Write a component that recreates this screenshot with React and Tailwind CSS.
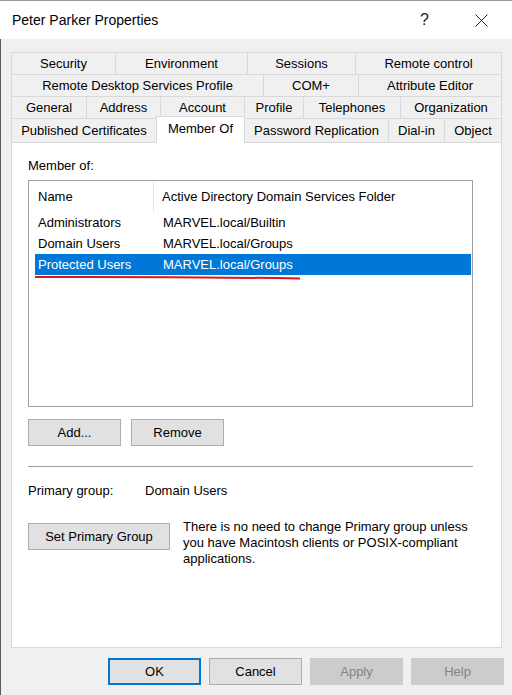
import React from 'react';

const rows = [
  [
    { label: 'Security', w: 104 },
    { label: 'Environment', w: 132 },
    { label: 'Sessions', w: 108 },
    { label: 'Remote control', w: 146 },
  ],
  [
    { label: 'Remote Desktop Services Profile', w: 252 },
    { label: 'COM+', w: 95 },
    { label: 'Attribute Editor', w: 143 },
  ],
  [
    { label: 'General', w: 75 },
    { label: 'Address', w: 74 },
    { label: 'Account', w: 84 },
    { label: 'Profile', w: 59 },
    { label: 'Telephones', w: 97 },
    { label: 'Organization', w: 101 },
  ],
];

const lastRow = [
  { label: 'Published Certificates', w: 144 },
  { label: 'Member Of', w: 89, selected: true },
  { label: 'Password Replication', w: 144 },
  { label: 'Dial-in', w: 56 },
  { label: 'Object', w: 57 },
];

const groups = [
  { name: 'Administrators', folder: 'MARVEL.local/Builtin' },
  { name: 'Domain Users', folder: 'MARVEL.local/Groups' },
  { name: 'Protected Users', folder: 'MARVEL.local/Groups', selected: true },
];

const Button = ({ children, width, primary, disabled }) => (
  <div
    className={
      'h-[27px] flex items-center justify-center text-[13px] ' +
      (primary
        ? 'border-2 border-[#0078d7] bg-[#e1e1e1] text-black'
        : disabled
        ? 'border border-[#cccccc] bg-[#cccccc] text-[#838383]'
        : 'border border-[#adadad] bg-[#e1e1e1] text-black')
    }
    style={{ width }}
  >
    {children}
  </div>
);

export default function App() {
  return (
    <div
      className="relative w-[512px] h-[695px] bg-[#f0f0f0] flex flex-col overflow-hidden text-black"
      style={{ fontFamily: '"Liberation Sans", Arial, sans-serif' }}
    >
      {/* Title bar */}
      <div className="h-[39px] shrink-0 bg-white border-t border-[#9a9a9a] flex items-center pl-[12px]">
        <span className="text-[14px] flex-1">Peter Parker Properties</span>
        <span className="text-[16px] w-[12px] mr-[43px] text-[#222]">?</span>
        <svg width="13" height="13" viewBox="0 0 13 13" className="mr-[24px]">
          <path d="M0.5 0.5 L12.5 12.5 M12.5 0.5 L0.5 12.5" stroke="#222" strokeWidth="1" />
        </svg>
      </div>

      {/* Body */}
      <div className="flex-1 border-l border-[#5a5a5a] pl-[10px] pt-[13px]">
        {/* Tabs */}
        <div className="flex flex-col text-[13px] leading-[16px]">
          {rows.map((row, i) => (
            <div key={i} className="flex h-[22px] border-l border-[#d9d9d9]">
              {row.map(t => (
                <div
                  key={t.label}
                  className="h-[22px] border-t border-r border-[#d9d9d9] flex items-center justify-center"
                  style={{ width: t.w }}
                >
                  {t.label}
                </div>
              ))}
            </div>
          ))}
          <div className="flex h-[24px] border-l border-[#d9d9d9]">
            {lastRow.map(t =>
              t.selected ? (
                <div
                  key={t.label}
                  className="relative z-10 h-[27px] mt-[-2px] mb-[-1px] bg-white border-l border-t border-r border-[#d9d9d9] flex justify-center pt-[4px]"
                  style={{ width: t.w }}
                >
                  {t.label}
                </div>
              ) : (
                <div
                  key={t.label}
                  className={
                    'h-[24px] border-t border-[#d9d9d9] flex items-center justify-center ' +
                    (t.label === 'Published Certificates' ? '' : 'border-r')
                  }
                  style={{ width: t.w }}
                >
                  {t.label}
                </div>
              )
            )}
          </div>
        </div>

        {/* Panel */}
        <div className="w-[491px] h-[506px] bg-white border border-[#d9d9d9] pl-[16px] pt-[15px] text-[13px] leading-[16px]">
          <div>Member of:</div>

          {/* List */}
          <div className="mt-[6px] w-[445px] h-[227px] border border-[#9da1a8]">
            <div className="h-[31px] flex items-center">
              <div className="w-[125px] h-full flex items-center pl-[9px] border-r border-[#e5e5e5]">Name</div>
              <div className="pl-[8px]">Active Directory Domain Services Folder</div>
            </div>
            {groups.map(g => (
              <div
                key={g.name}
                className={
                  'h-[21px] ml-[6px] mr-[1px] pl-[3px] flex items-center ' +
                  (g.selected ? 'bg-[#0078d7] text-white' : '')
                }
              >
                <div className="w-[125px]">{g.name}</div>
                <div>{g.folder}</div>
              </div>
            ))}
          </div>

          <div className="mt-[12px] flex gap-[10px]">
            <Button width={93}>Add...</Button>
            <Button width={93}>Remove</Button>
          </div>

          <div className="mt-[20px] w-[445px] h-px bg-[#a0a0a0]" />

          <div className="mt-[16px] flex">
            <div className="w-[117px]">Primary group:</div>
            <div>Domain Users</div>
          </div>

          <div className="mt-[24px] flex items-start gap-[13px]">
            <Button width={142}>Set Primary Group</Button>
            <div className="mt-[-4px] w-[300px]">
              There is no need to change Primary group unless you have Macintosh clients or POSIX-compliant applications.
            </div>
          </div>
        </div>

        {/* Dialog buttons */}
        <div className="mt-[10px] flex justify-end gap-[8px] pr-[8px]">
          <Button width={93} primary>OK</Button>
          <Button width={93}>Cancel</Button>
          <Button width={93} disabled>Apply</Button>
          <Button width={93} disabled>Help</Button>
        </div>
      </div>

      {/* Red annotation underline */}
      <svg className="absolute left-0 top-0 pointer-events-none" width="512" height="695">
        <path d="M35 277 Q 170 276.5 300 278.5" stroke="#e8101a" strokeWidth="2" fill="none" />
      </svg>
    </div>
  );
}
